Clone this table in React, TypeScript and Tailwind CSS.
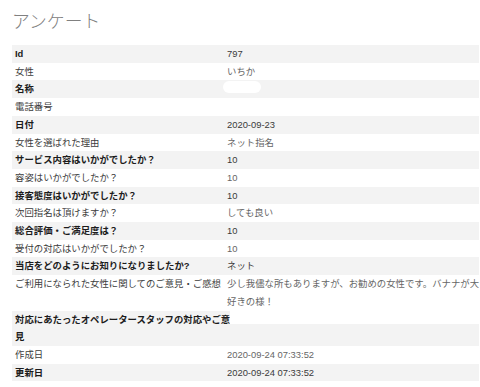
import React from "react";

type Row = { label: React.ReactNode; value: React.ReactNode };

const rows: Row[] = [
  { label: "Id", value: "797" },
  { label: "女性", value: "いちか" },
  {
    label: "名称",
    value: <div className="ml-[-4px] mt-[1px] h-[12px] w-[38px] rounded-full bg-white" />,
  },
  { label: "電話番号", value: "" },
  { label: "日付", value: "2020-09-23" },
  { label: "女性を選ばれた理由", value: "ネット指名" },
  { label: "サービス内容はいかがでしたか？", value: "10" },
  { label: "容姿はいかがでしたか？", value: "10" },
  { label: "接客態度はいかがでしたか？", value: "10" },
  { label: "次回指名は頂けますか？", value: "しても良い" },
  { label: "総合評価・ご満足度は？", value: "10" },
  { label: "受付の対応はいかがでしたか？", value: "10" },
  { label: "当店をどのようにお知りになりましたか?", value: "ネット" },
  {
    label: "ご利用になられた女性に関してのご意見・ご感想",
    value: (
      <>
        少し我儘な所もありますが、お勧めの女性です。バナナが大
        <br />
        好きの様！
      </>
    ),
  },
  {
    label: (
      <>
        対応にあたったオペレータースタッフの対応やご意
        <br />見
      </>
    ),
    value: <div className="ml-[3px] mr-[-3px] h-[13px] bg-white" />,
  },
  { label: "作成日", value: "2020-09-24 07:33:52" },
  { label: "更新日", value: "2020-09-24 07:33:52" },
];

export default function App() {
  return (
    <div
      className="min-h-[387px] w-[480px] bg-white"
      style={{ fontFamily: '"Liberation Sans", "Noto Sans CJK JP", sans-serif' }}
    >
      <div className="h-[45px] pl-[12px] pt-[12px]">
        <h1 className="text-[17.8px] font-light leading-[20px] text-[#808080]">アンケート</h1>
      </div>
      <div className="ml-[12px] w-[467px] text-[9.4px] leading-[17.7px]">
        {rows.map((r, i) => {
          const odd = i % 2 === 0;
          return (
            <div
              key={i}
              className={
                odd
                  ? "grid grid-cols-[212px_1fr] bg-[#f3f3f3]"
                  : "grid grid-cols-[212px_1fr] bg-white"
              }
            >
              <div
                className={
                  odd
                    ? "whitespace-nowrap pl-[3px] font-bold text-[#1c1c1c]"
                    : "whitespace-nowrap pl-[3px] text-[#3c3c3c]"
                }
              >
                {r.label}
              </div>
              <div
                className={
                  odd
                    ? "whitespace-nowrap pl-[3px] font-normal text-[#3a3a3a]"
                    : "whitespace-nowrap pl-[3px] font-normal text-[#666666]"
                }
              >
                {r.value}
              </div>
            </div>
          );
        })}
      </div>
    </div>
  );
}
